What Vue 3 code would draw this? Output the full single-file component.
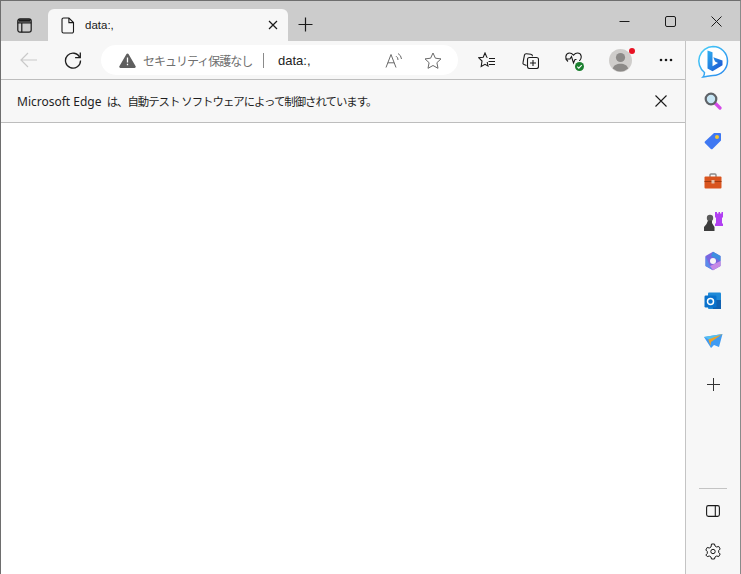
<script setup>
</script>

<template>
  <div class="win">
    <header class="titlebar">
      <button class="tabs-btn">
        <svg width="15" height="15" viewBox="0 0 15 15" fill="none" stroke="#1a1a1a" stroke-width="1.200"><rect x="0.800" y="0.800" width="13.400" height="13.400" rx="2.200"/><path d="M0.800 4.800h13.400M4.800 4.800v9.400" /><path d="M1.500 2.500h12" stroke-width="2.500"/></svg>
      </button>
      <div class="tab">
        <svg class="page" width="14" height="17" viewBox="0 0 14 17" fill="none" stroke="#1a1a1a" stroke-width="1.100"><path d="M2.500 1h5.400L12.500 5.600V14.500a1.500 1.500 0 0 1-1.500 1.500H2.500A1.500 1.500 0 0 1 1 14.500V2.500A1.500 1.500 0 0 1 2.500 1Z"/><path d="M7.900 1V5.600H12.500"/></svg>
        <span class="tab-title">data:,</span>
        <svg class="tab-x" width="10" height="10" viewBox="0 0 10 10" stroke="#1a1a1a" stroke-width="1.200"><path d="M1 1l8 8M9 1L1 9"/></svg>
      </div>
      <svg class="newtab" width="15" height="15" viewBox="0 0 15 15" stroke="#1a1a1a" stroke-width="1.200"><path d="M7.500 0.500v14M0.500 7.500h14"/></svg>
      <div class="winctl">
        <svg width="11" height="11" viewBox="0 0 11 11" stroke="#1a1a1a" stroke-width="1"><path d="M0.500 5.500h10"/></svg>
        <svg width="11" height="11" viewBox="0 0 11 11" fill="none" stroke="#1a1a1a" stroke-width="1"><rect x="0.500" y="0.500" width="10" height="10" rx="1.500"/></svg>
        <svg width="11" height="11" viewBox="0 0 11 11" stroke="#1a1a1a" stroke-width="1"><path d="M0.500 0.500l10 10M10.500 0.500l-10 10"/></svg>
      </div>
    </header>

    <div class="below">
      <main class="main">
        <nav class="toolbar">
          <svg class="back" width="18" height="16" viewBox="0 0 18 16" fill="none" stroke="#c9c9c9" stroke-width="1.200"><path d="M17 8H1M8 1L1 8l7 7"/></svg>
          <svg class="reload" width="18" height="18" viewBox="0 0 18 18" fill="none" stroke="#1f1f1f" stroke-width="1.300"><path d="M15.800 6.500A7.500 7.500 0 1 0 16.500 9.500"/><path d="M16.300 1.500v5.200h-5.200"/></svg>
          <div class="omnibox">
            <svg class="warn" width="17" height="15" viewBox="0 0 17 15"><path d="M8.500 0.500a1.200 1.200 0 0 1 1 .6l7 12a1.200 1.200 0 0 1-1 1.900h-14a1.200 1.200 0 0 1-1-1.900l7-12a1.200 1.200 0 0 1 1-.6Z" fill="#5f5f5f"/><path d="M8.500 4.500v5M8.500 10.800v1.500" stroke="#fff" stroke-width="1.300"/></svg>
            <span class="insecure">セキュリティ保護なし</span>
            <span class="sep"></span>
            <span class="url">data:,</span>
            <svg class="read" width="19" height="16" viewBox="0 0 19 16" fill="none" stroke="#6a6a6a" stroke-width="1"><path d="M1 15.500L6 2.500 11 15.500M2.800 10.800h6.400"/><path d="M11 4.200a4 4 0 0 1 2 3.800M13 1.500a7 7 0 0 1 3.500 5.500" /></svg>
            <svg class="star" width="18" height="17" viewBox="0 0 18 17" fill="none" stroke="#6a6a6a" stroke-width="1"><path d="M9 1l2.400 5.200 5.600.7-4.100 3.800 1.100 5.600L9 13.500 4 16.300l1.100-5.600L1 6.900l5.600-.7Z"/></svg>
          </div>
          <svg class="fav" width="17" height="16" viewBox="0 0 17 16" fill="none" stroke="#1a1a1a" stroke-width="1.100"><path d="M9.500 5.500 8.800 5.200 7 1 5.200 5.200.8 5.800 4 9 3.200 14.500 7 12.300 10 14 9.200 10"/><path d="M11 6.500h6M10.500 9.500h6.500M11 12.500h6"/></svg>
          <svg class="coll" width="17" height="17" viewBox="0 0 17 17" fill="none" stroke="#1a1a1a" stroke-width="1.100"><path d="M4.500 13.500 2 12.500a1.500 1.500 0 0 1-1-1.800L2.500 3A1.700 1.700 0 0 1 4.300 1.800l4.500.5a2 2 0 0 1 1.700 2"/><rect x="5.500" y="5.500" width="11" height="11" rx="2"/><path d="M11 8v6M8 11h6"/></svg>
          <div class="health">
            <svg width="17" height="14" viewBox="0 0 17 14" fill="none" stroke="#1a1a1a" stroke-width="1.100"><path d="M3 9.500C-0.500 6.500 0.500 1 4.500 1c2 0 3 1 4 2.200C9.500 2 10.500 1 12.500 1c4 0 5 5 1.800 8"/><path d="M0.500 7H5L6.500 4.500 8.500 11 10 7.500h1.500"/></svg>
            <span class="ok"><svg width="7" height="7" viewBox="0 0 7 7" fill="none" stroke="#fff" stroke-width="1.100"><path d="M1.300 3.700l1.500 1.500 2.900-3"/></svg></span>
          </div>
          <div class="avatar">
            <svg width="23" height="23" viewBox="0 0 23 23"><circle cx="11.500" cy="11.500" r="11.500" fill="#cfcdcb"/><circle cx="11.500" cy="8.500" r="4.600" fill="#8c8a88"/><path d="M3.800 19.500c.8-3.300 3.800-4.800 7.700-4.800s6.900 1.500 7.700 4.800a11.500 11.500 0 0 1-15.400 0Z" fill="#8c8a88"/></svg>
            <span class="dot"></span>
          </div>
          <svg class="more" width="14" height="4" viewBox="0 0 14 4" fill="#1a1a1a"><circle cx="2" cy="2" r="1.300"/><circle cx="7" cy="2" r="1.300"/><circle cx="12" cy="2" r="1.300"/></svg>
        </nav>
        <div class="infobar">
          <span class="info-text">Microsoft Edge <span class="ja">は、自動テスト ソフトウェアによって制御されています。</span></span>
          <svg width="12" height="12" viewBox="0 0 12 12" stroke="#1a1a1a" stroke-width="1.100"><path d="M0.500 0.500l11 11M11.500 0.500l-11 11"/></svg>
        </div>
        <div class="content"></div>
      </main>

      <aside class="side">
        <svg class="bing" width="32" height="33" viewBox="0 0 32 33">
          <defs>
            <linearGradient id="rim" x1="0" y1="0" x2="1" y2="1"><stop offset="0" stop-color="#48d0f8"/><stop offset="1" stop-color="#2a86ec"/></linearGradient>
            <linearGradient id="bb" x1="0" y1="0" x2="1" y2="1"><stop offset="0" stop-color="#2fb0f0"/><stop offset="1" stop-color="#1a4fd0"/></linearGradient>
          </defs>
          <path d="M16 1.500a14.500 14.500 0 0 1 0 29c-2.500 0-7 1.200-10 1.500 1-1 1.500-2.400 1.500-4.500A14.500 14.500 0 0 1 16 1.500Z" fill="#fff" stroke="url(#rim)" stroke-width="1.500"/>
          <path d="M10.500 5.500l5 1.700v14l5.500-3.100-3-1.500-1.700-4.300 9.200 3.200v4.800l-10 5.900-5-2.800Z" fill="url(#bb)"/>
        </svg>
        <div class="slot">
          <svg width="18" height="18" viewBox="0 0 18 18"><path d="M11 11l5 5" stroke="#d44ae8" stroke-width="3.200" stroke-linecap="round"/><circle cx="7" cy="7" r="5.300" fill="#c7e6f5" stroke="#5f6368" stroke-width="2.200"/></svg>
        </div>
        <div class="slot">
          <svg width="18" height="18" viewBox="0 0 18 18"><path d="M10 1h6a1 1 0 0 1 1 1v6.500l-8.500 8.500a1.200 1.200 0 0 1-1.600 0L.9 11a1.200 1.200 0 0 1 0-1.600Z" fill="#3f78f2"/><circle cx="13" cy="5" r="2" fill="#f3c530"/></svg>
        </div>
        <div class="slot">
          <svg width="18" height="16" viewBox="0 0 18 16"><path d="M6 4V2a1 1 0 0 1 1-1h4a1 1 0 0 1 1 1v2" fill="none" stroke="#8a8a8a" stroke-width="1.400"/><rect x="0.500" y="3.500" width="17" height="12" rx="1" fill="#d9541e"/><rect x="0.500" y="8" width="17" height="1" fill="#9c3a12"/><rect x="7.500" y="7" width="3" height="3.500" fill="#e3c0a8"/></svg>
        </div>
        <div class="slot">
          <svg width="19" height="19" viewBox="0 0 19 19"><path d="M11 0h2v1.500h1.500V0h1.500v1.500h1.500V0H19v5l-1 1v5l1 1v2h-8v-2l1-1V6l-1-1Z" fill="#b13ff2"/><circle cx="6" cy="6" r="3.200" fill="#5a5a5a"/><path d="M4 8.500h4v2.500l2.500 4v4H0v-4l2.500-3Z" fill="#3d3d3d"/></svg>
        </div>
        <div class="slot">
          <svg width="18" height="20" viewBox="0 0 18 20"><path d="M9 .8 16.500 5v10L9 19.200 1.500 15V5Z" fill="#7a66e0"/><path d="M9 .8 16.500 5v5L7 5Z" fill="#3d8fe0"/><path d="M1.500 5 6 15l3 4.200L1.500 15Z" fill="#5b8cea"/><path d="M16.500 10v5L9 19.200 6 15Z" fill="#c68ae6"/><circle cx="9" cy="10" r="3" fill="#f7f7f7"/></svg>
        </div>
        <div class="slot">
          <svg width="18" height="18" viewBox="0 0 18 18"><rect x="4" y="0.500" width="13" height="16.500" rx="1" fill="#1f8ad8"/><path d="M8 8h9v9H9Z" fill="#1060b0"/><rect x="0.500" y="3.500" width="12" height="12" rx="1.200" fill="#0a72cc"/><circle cx="6.500" cy="9.500" r="3" fill="none" stroke="#fff" stroke-width="1.500"/></svg>
        </div>
        <div class="slot">
          <svg width="19" height="14" viewBox="0 0 19 14"><path d="M0 3 18.500 0 15 13l-5-2-3 3Z" fill="#3f9bf3"/><path d="M0 3 18.500 0 6 6Z" fill="#55c0ef"/><path d="M4.500 5.500 18.500 0 7 8l-.5 4Z" fill="#eca22a"/></svg>
        </div>
        <svg class="plus" width="13" height="13" viewBox="0 0 13 13" stroke="#333" stroke-width="1"><path d="M6.500 0v13M0 6.500h13"/></svg>
        <div class="spacer"></div>
        <div class="rule"></div>
        <div class="slot">
          <svg width="14" height="12" viewBox="0 0 14 12" fill="none" stroke="#1a1a1a" stroke-width="1.100"><rect x="0.600" y="0.600" width="12.800" height="10.800" rx="1.800"/><path d="M9.300 0.600v10.800"/></svg>
        </div>
        <div class="slot">
          <svg width="16" height="17" viewBox="0 0 16 17" fill="none" stroke="#1a1a1a" stroke-width="1"><path d="M6.500 1h3l.5 2 1.700 1 2-.6 1.500 2.600-1.500 1.500v2l1.500 1.500-1.500 2.600-2-.6-1.700 1-.5 2h-3l-.5-2-1.700-1-2 .6L.8 12l1.500-1.500v-2L.8 7l1.500-2.600 2 .6L6 4Z"/><circle cx="8" cy="8.500" r="2.200"/></svg>
        </div>
      </aside>
    </div>
  </div>
</template>

<style scoped>
.win {
  width: 741px;
  height: 574px;
  box-sizing: border-box;
  border: 1px solid #6e6e6e;
  border-right-color: #8a8a8a;
  border-bottom: 0;
  display: flex;
  flex-direction: column;
  overflow: hidden;
  font-family: "Liberation Sans", "Noto Sans CJK JP", sans-serif;
  color: #1a1a1a;
}
.titlebar {
  height: 40px;
  flex: none;
  background: #cccccc;
  display: flex;
  align-items: flex-end;
  position: relative;
}
.tabs-btn {
  width: 47px;
  height: 32px;
  padding: 0;
  border: 0;
  background: transparent;
  display: flex;
  align-items: center;
  justify-content: center;
}
.tab {
  width: 240px;
  height: 32px;
  background: #f7f7f7;
  border-radius: 6px 6px 0 0;
  display: flex;
  align-items: center;
  box-sizing: border-box;
  padding: 0 10px 0 13px;
}
.tab-title {
  font-size: 11.5px;
  margin-left: 10px;
  flex: 1;
}
.newtab {
  margin: 0 0 9px 10px;
}
.winctl {
  margin-left: auto;
  align-self: flex-start;
  display: flex;
  gap: 35px;
  padding: 15px 18px 0 0;
}
.below {
  flex: 1;
  min-height: 0;
  display: flex;
}
.main {
  width: 684px;
  flex: none;
  display: flex;
  flex-direction: column;
}
.toolbar {
  height: 38px;
  flex: none;
  background: #f7f7f7;
  display: flex;
  align-items: center;
  padding-left: 19px;
  box-sizing: content-box;
  border-bottom: 1px solid #bdbdbd;
}
.back { flex: none; }
.reload { margin-left: 26px; flex: none; }
.omnibox {
  width: 357px;
  height: 30px;
  margin-left: 19px;
  background: #fff;
  border-radius: 15px;
  display: flex;
  align-items: center;
  flex: none;
  box-sizing: border-box;
  padding-left: 18px;
  position: relative;
}
.insecure {
  font-size: 12px;
  letter-spacing: -1px;
  color: #6f6f6f;
  margin-left: 7px;
  width: 109px;
  white-space: nowrap;
}
.sep {
  width: 1px;
  height: 15px;
  background: #8a8a8a;
  margin-left: 11px;
}
.url {
  font-size: 13px;
  margin-left: 14px;
  color: #222;
}
.read { margin-left: auto; }
.star { margin: 0 16px 0 20px; }
.fav { margin-left: 20px; flex: none; }
.coll { margin-left: 27px; flex: none; }
.health { margin-left: 26px; position: relative; width: 17px; height: 17px; flex: none; }
.ok {
  position: absolute;
  right: -2px;
  bottom: -2px;
  width: 9px;
  height: 9px;
  background: #1a7f2e;
  border-radius: 50%;
  display: flex;
  align-items: center;
  justify-content: center;
  box-shadow: 0 0 0 1px #f7f7f7;
}
.avatar { margin-left: 27px; position: relative; width: 23px; height: 23px; flex: none; }
.dot {
  position: absolute;
  top: -1px;
  right: -3px;
  width: 6px;
  height: 6px;
  background: #e81123;
  border-radius: 50%;
}
.more { margin-left: 27px; flex: none; }
.infobar {
  height: 42px;
  flex: none;
  background: #f7f7f7;
  border-bottom: 1px solid #bdbdbd;
  display: flex;
  align-items: center;
  justify-content: space-between;
  padding: 0 18px 0 16px;
  box-sizing: content-box;
}
.info-text {
  font-family: "Noto Sans", "Noto Sans CJK JP", sans-serif;
  font-size: 12px;
  color: #1f1f1f;
  white-space: nowrap;
}
.ja { letter-spacing: -1px; font-size: 11.400px; margin-left: 2px; }
.content { flex: 1; background: #fff; }
.side {
  flex: 1;
  background: #f7f7f7;
  border-left: 1px solid #c4c4c4;
  display: flex;
  flex-direction: column;
  align-items: center;
  padding-bottom: 3px;
}
.bing { margin: 4px 0 3px; flex: none; }
.slot {
  height: 40px;
  flex: none;
  display: flex;
  align-items: center;
  justify-content: center;
}
.plus { margin-top: 17px; flex: none; }
.spacer { flex: 1; }
.rule { width: 28px; height: 1px; background: #c4c4c4; margin-bottom: 2px; flex: none; }
</style>

<style>
html, body { margin: 0; background: #fff; }
</style>
